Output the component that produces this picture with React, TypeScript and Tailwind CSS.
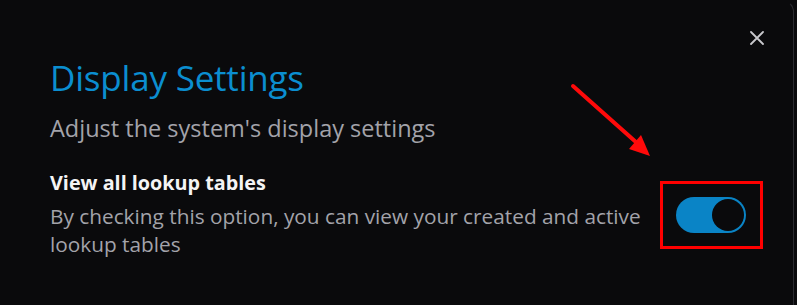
import React, { useState } from 'react';

const App = () => {
  const [enabled, setEnabled] = useState(true);

  return (
    <div className="relative w-[797px] h-[305px] overflow-hidden bg-[#0a0a0c]" style={{ fontFamily: '"Open Sans", "Noto Sans", sans-serif' }}>
      {/* dialog panel, clipped on the left */}
      <div className="relative w-[794px] h-[320px] rounded-tr-[12px] border-r border-t border-r-[#2c2c31] border-t-transparent bg-[#0a0a0c]">
        <button className="absolute top-[28px] right-[27px] text-[#c8c8cc]">
          <svg width="18" height="18" viewBox="0 0 18 18" fill="none" stroke="currentColor" strokeWidth="1.8" strokeLinecap="round">
            <path d="M3 3l12 12M15 3L3 15" />
          </svg>
        </button>

        <div className="pl-[50px] pr-[30px] pt-[54px]">
          <h2 className="text-[35px] leading-[46px] text-[#0b8ed0] tracking-[-0.2px]">Display Settings</h2>
          <p className="mt-[12px] text-[23.5px] leading-[30px] text-[#a3a3aa]">Adjust the system's display settings</p>

          <div className="mt-[27px] flex items-start justify-between">
            <div className="w-[602px]">
              <div className="text-[19.8px] leading-[26px] font-bold text-[#f4f4f5]">View all lookup tables</div>
              <p className="mt-[6px] text-[20.8px] leading-[28px] text-[#a3a3aa]">
                By checking this option, you can view your created and active lookup tables
              </p>
            </div>

            {/* highlighted toggle */}
            <div className="mt-[11px] border-[3px] border-[#ff0000] pl-[13px] pr-[14px] py-[13px]">
              <button
                onClick={() => setEnabled(!enabled)}
                className={
                  enabled
                    ? 'flex h-[36px] w-[70px] items-center justify-end rounded-full bg-[#0a84c6] px-[2px]'
                    : 'flex h-[36px] w-[70px] items-center justify-start rounded-full bg-[#3a3a40] px-[2px]'
                }
              >
                <span className="block h-[32px] w-[32px] rounded-full bg-[#0a0a0c]" />
              </button>
            </div>
          </div>
        </div>
      </div>

      {/* annotation arrow */}
      <svg className="absolute left-[565px] top-[80px]" width="95" height="85" viewBox="0 0 95 85">
        <path d="M8 6L72 63" stroke="#ff0a0a" strokeWidth="4" strokeLinecap="round" />
        <path d="M85 76L64 69L76 55Z" fill="#ff0a0a" />
      </svg>
    </div>
  );
};

export default App;
